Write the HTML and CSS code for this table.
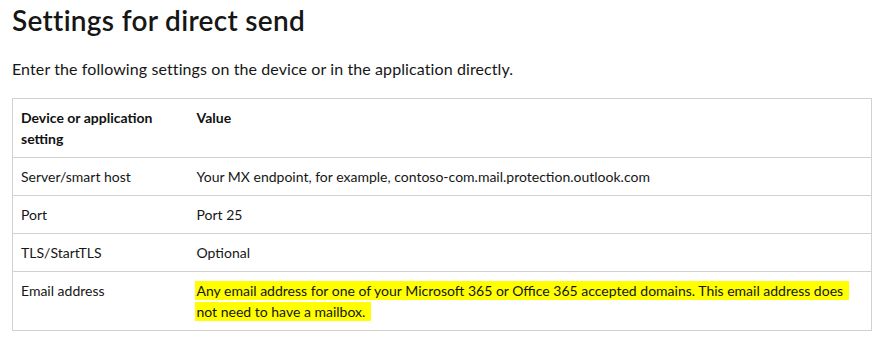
FILE: index.html
```html
<!DOCTYPE html>
<html lang="en">
<head>
<meta charset="utf-8">
<title>Settings for direct send</title>
<link rel="stylesheet" href="styles.css">
</head>
<body>
<main class="page">
  <h1 class="title">Settings for direct send</h1>
  <p class="intro">Enter the following settings on the device or in the application directly.</p>
  <table class="settings">
    <colgroup>
      <col class="col-name">
      <col class="col-value">
    </colgroup>
    <thead>
      <tr>
        <th>Device or application setting</th>
        <th>Value</th>
      </tr>
    </thead>
    <tbody>
      <tr>
        <td>Server/smart host</td>
        <td>Your MX endpoint, for example, contoso-com.mail.protection.outlook.com</td>
      </tr>
      <tr>
        <td>Port</td>
        <td>Port 25</td>
      </tr>
      <tr>
        <td>TLS/StartTLS</td>
        <td>Optional</td>
      </tr>
      <tr>
        <td>Email address</td>
        <td><span class="highlight">Any email address for one of your Microsoft 365 or Office 365 accepted domains. This email address does not need to have a mailbox.</span></td>
      </tr>
    </tbody>
  </table>
</main>
</body>
</html>
```

FILE: styles.css
```css
html, body {
  margin: 0;
  padding: 0;
  background: #ffffff;
}

body {
  font-family: "Lato", "Open Sans", sans-serif;
  color: #161616;
}

.page {
  padding: 0 18px 0 12px;
}

.title {
  margin: 0;
  padding-top: 2px;
  font-size: 28px;
  line-height: 36px;
  font-weight: 600;
  letter-spacing: 0.3px;
  color: #161616;
}

.intro {
  margin: 20px 0 0 0;
  font-size: 16px;
  line-height: 22px;
  letter-spacing: 0.1px;
}

.settings {
  margin-top: 18px;
  width: 860px;
  border-collapse: collapse;
  table-layout: fixed;
  border: 1px solid #d1d1d1;
  font-size: 14px;
  line-height: 21px;
}

.col-name {
  width: 176px;
}

.settings th,
.settings td {
  text-align: left;
  vertical-align: top;
  padding: 8px 8px;
  border-top: 1px solid #d1d1d1;
}

.settings th {
  font-weight: 700;
  color: #111111;
}

.settings th:first-child {
  padding-right: 20px;
}

.highlight {
  background: #ffff00;
  padding: 1px 6px 1px 2px;
  margin-left: -2px;
  -webkit-box-decoration-break: clone;
  box-decoration-break: clone;
}
```
